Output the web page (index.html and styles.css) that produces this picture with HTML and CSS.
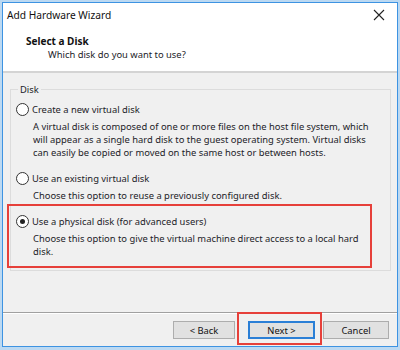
FILE: index.html
```html
<!DOCTYPE html>
<html>
<head>
<meta charset="utf-8">
<link rel="stylesheet" href="styles.css">
</head>
<body>
<div class="window">
  <div class="titlebar">
    <span class="title">Add Hardware Wizard</span>
    <svg class="close" width="12" height="12" viewBox="0 0 12 12"><path d="M1 1 L11 11 M11 1 L1 11" stroke="#222" stroke-width="1.1" fill="none"/></svg>
  </div>
  <div class="header">
    <div class="h-title">Select a Disk</div>
    <div class="h-sub">Which disk do you want to use?</div>
  </div>
  <div class="content">
    <fieldset class="group">
      <legend class="legend">Disk</legend>
      <div class="option">
        <div class="opt-row"><span class="radio"></span><span>Create a new virtual disk</span></div>
        <div class="desc">A virtual disk is composed of one or more files on the host file system, which will appear as a single hard disk to the guest operating system. Virtual disks can easily be copied or moved on the same host or between hosts.</div>
      </div>
      <div class="option">
        <div class="opt-row"><span class="radio"></span><span>Use an existing virtual disk</span></div>
        <div class="desc">Choose this option to reuse a previously configured disk.</div>
      </div>
      <div class="option last">
        <div class="opt-row"><span class="radio checked"></span><span>Use a physical disk (for advanced users)</span></div>
        <div class="desc">Choose this option to give the virtual machine direct access to a local hard disk.</div>
        <div class="highlight hl-option"></div>
      </div>
    </fieldset>
  </div>
  <div class="footer">
    <button class="btn btn-back">&lt; Back</button>
    <span class="next-wrap">
      <button class="btn btn-next">Next &gt;</button>
      <span class="highlight hl-next"></span>
    </span>
    <button class="btn btn-cancel">Cancel</button>
  </div>
</div>
</body>
</html>
```

FILE: styles.css
```css
html, body {
  margin: 0;
  padding: 0;
}
body {
  width: 400px;
  height: 350px;
  box-sizing: border-box;
  padding: 2px 2px 3px 2px;
  background: #bcd9f2;
  font-family: "Noto Sans", "Open Sans", sans-serif;
  font-size: 9.4px;
  color: #1c1c28;
}
.window {
  height: 100%;
  box-sizing: border-box;
  border: 1px solid #3d93e2;
  background: #f0f0f0;
  display: flex;
  flex-direction: column;
}
.titlebar {
  height: 23px;
  background: #fff;
  display: flex;
  align-items: center;
  justify-content: space-between;
  padding: 0 12px 0 4px;
}
.title {
  font-size: 10.2px;
  color: #111;
}
.close {
  display: block;
}
.header {
  height: 47px;
  background: #fff;
  border-bottom: 2px solid #d4d4d4;
  box-sizing: border-box;
  padding: 8px 0 0 23px;
}
.h-title {
  font-weight: bold;
  font-size: 10px;
  color: #111;
  line-height: 14px;
}
.h-sub {
  padding-left: 22px;
  line-height: 13px;
}
.content {
  flex: 1;
  padding: 10px 6px 0 7px;
  border-bottom: 1px solid #a0a0a0;
}
.group {
  margin: 0;
  border: 1px solid #dcdcdc;
  padding: 2px 4px 6px 5px;
  height: 188px;
  box-sizing: border-box;
}
.legend {
  padding: 0 2px;
  margin-left: 2px;
  line-height: 13px;
}
.option {
  position: relative;
  margin-top: 4px;
}
.option + .option {
  margin-top: 12px;
}
.opt-row {
  display: flex;
  align-items: center;
  height: 15px;
}
.radio {
  width: 11px;
  height: 11px;
  border: 1px solid #333;
  border-radius: 50%;
  background: #fff;
  margin-right: 3px;
  box-sizing: content-box;
  display: flex;
  align-items: center;
  justify-content: center;
}
.radio.checked::after {
  content: "";
  width: 5px;
  height: 5px;
  border-radius: 50%;
  background: #222;
}
.desc {
  padding-left: 17px;
  padding-right: 10px;
  line-height: 13px;
  margin-top: 3px;
}
.highlight {
  position: absolute;
  border: 2px solid #e6403a;
  box-sizing: border-box;
  pointer-events: none;
}
.hl-option {
  left: -9px;
  top: -10px;
  width: 365px;
  height: 64px;
}
.footer {
  height: 32px;
  border-top: 1px solid #fff;
  display: flex;
  align-items: center;
  padding-left: 170px;
}
.btn {
  height: 18px;
  font-family: inherit;
  font-size: 9.4px;
  color: #111;
  background: #e1e1e1;
  border: 1px solid #adadad;
  padding: 0;
  box-sizing: border-box;
}
.btn-back {
  width: 62px;
}
.next-wrap {
  position: relative;
  margin-left: 13px;
  display: block;
}
.btn-next {
  width: 67px;
  display: block;
  border: 2px solid #2b7fd6;
}
.hl-next {
  left: -11px;
  top: -9px;
  width: 85px;
  height: 33px;
}
.btn-cancel {
  width: 66px;
  margin-left: 8px;
}
```
